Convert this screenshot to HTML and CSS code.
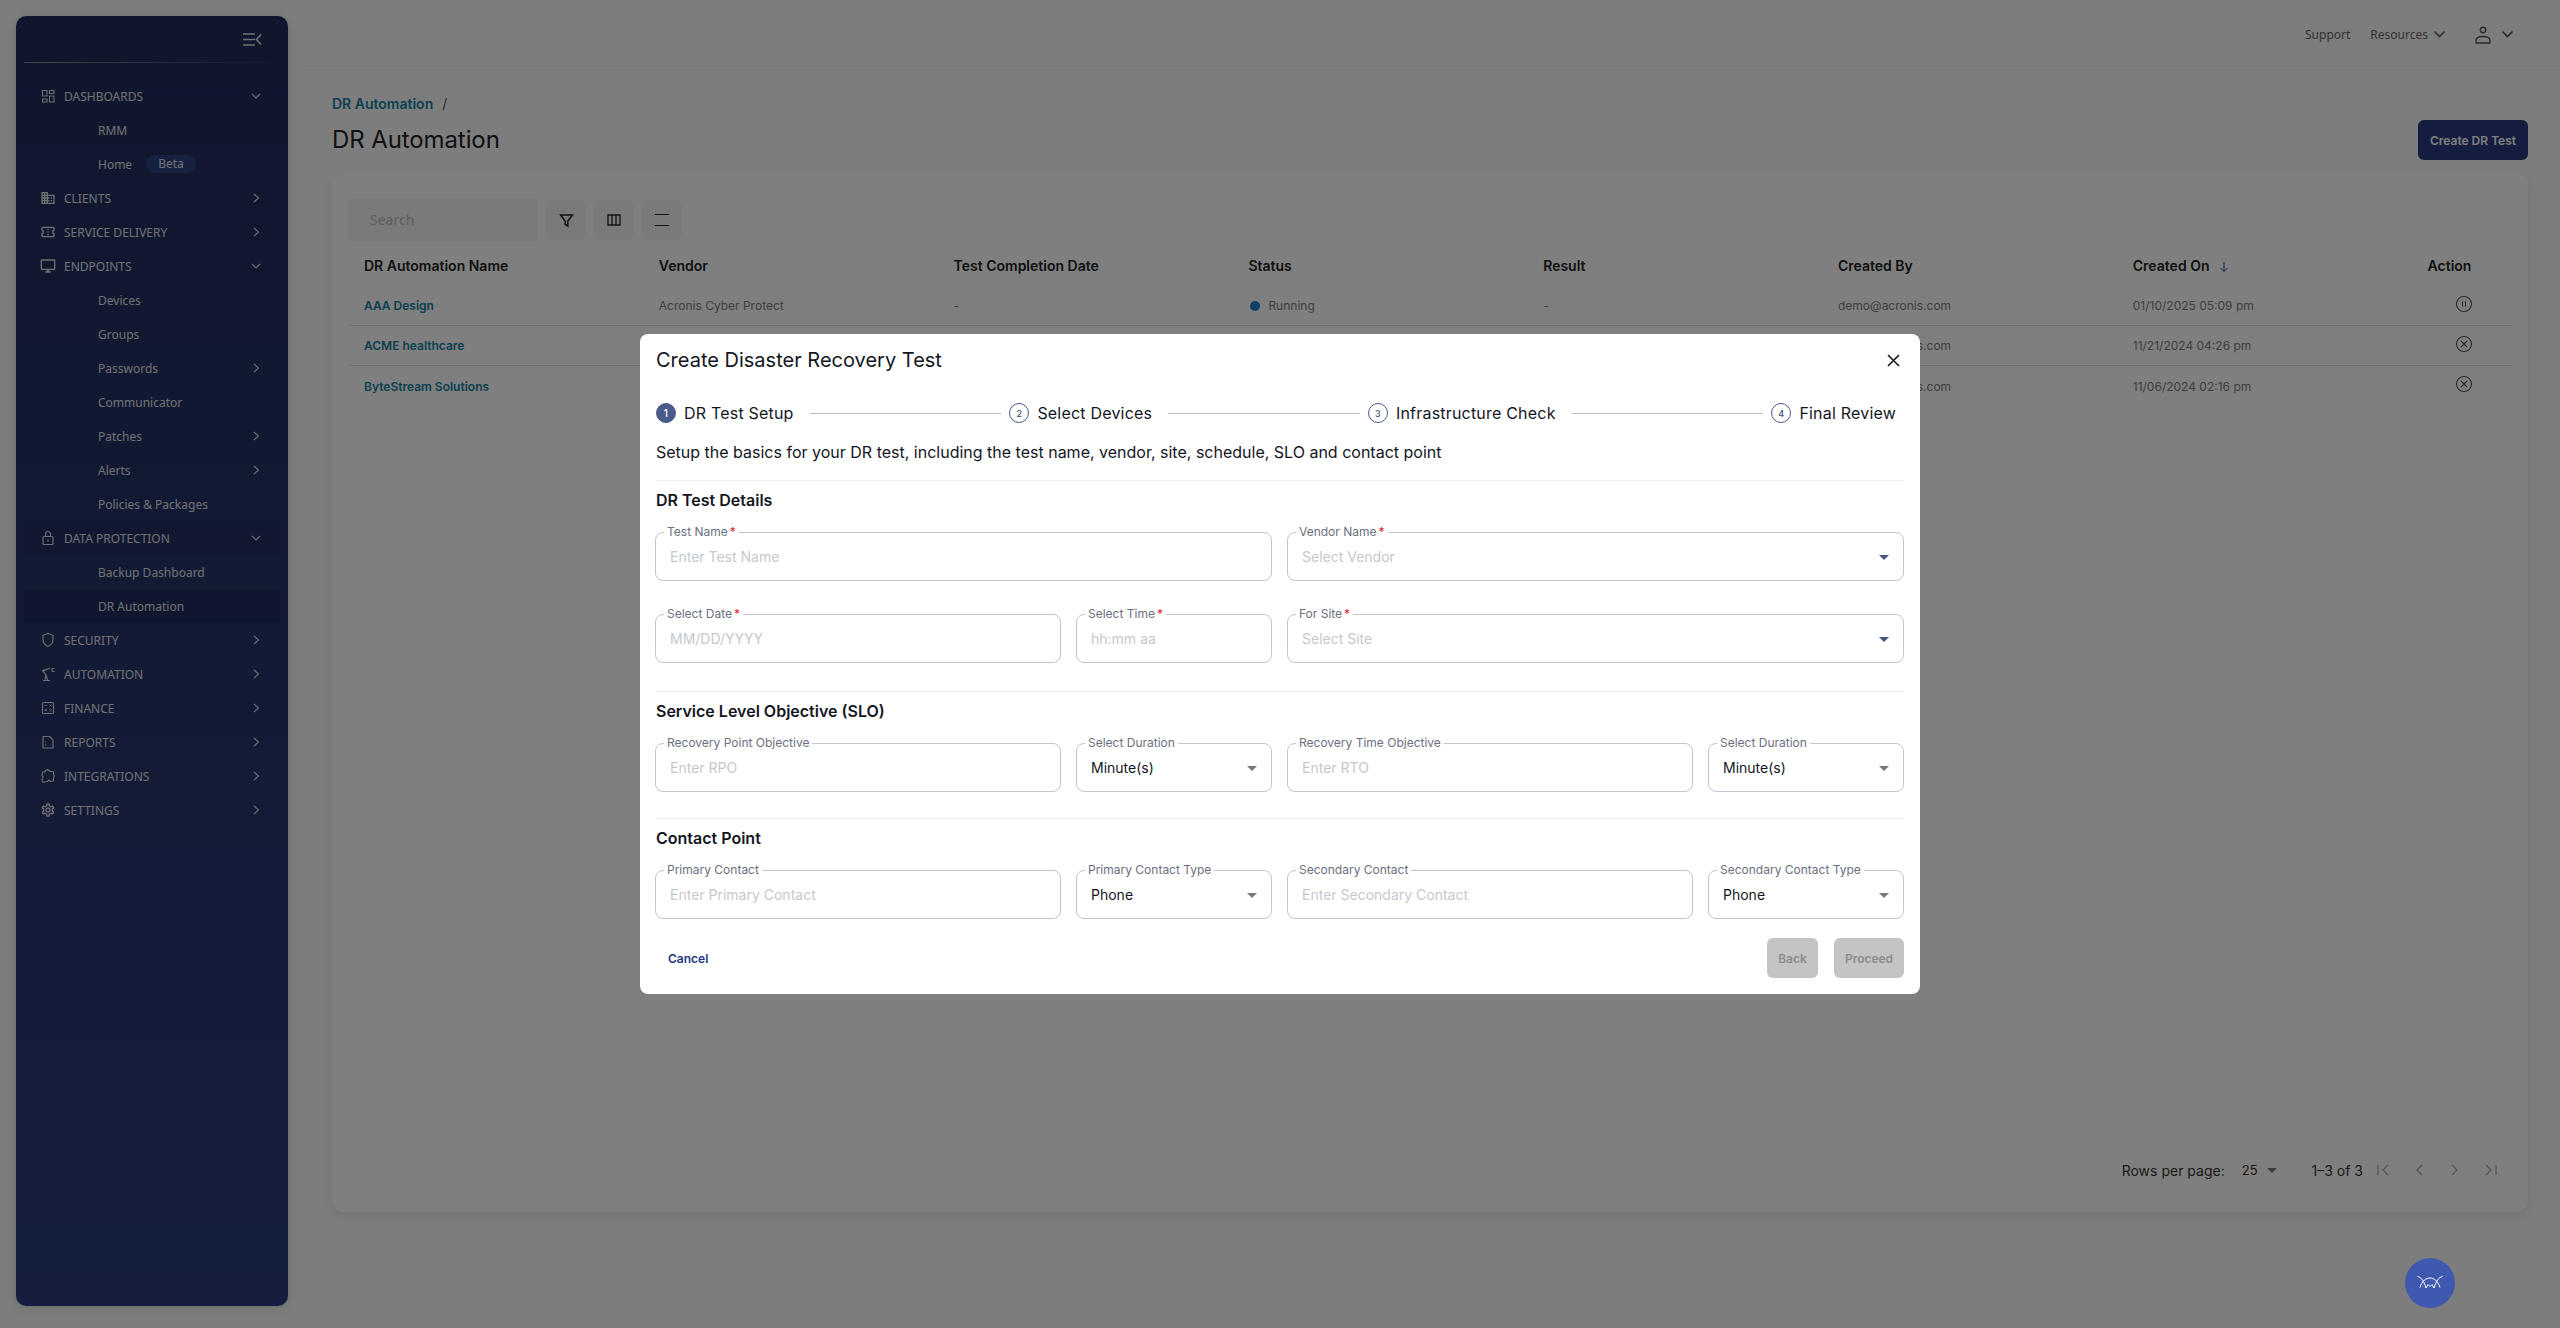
FILE: index.html
```html
<!DOCTYPE html>
<html lang="en">

<head>
    <meta charset="utf-8">
    <title>DR Automation</title>
    <link rel="stylesheet" href="styles.css">
</head>

<body>
    <svg class="icon-defs" aria-hidden="true">
        <symbol id="chev-right" viewBox="0 0 12 12"><path d="M4 2l4.500 4L4 10" fill="none" stroke="currentColor" stroke-width="1.100"/></symbol>
        <symbol id="chev-down" viewBox="0 0 12 12"><path d="M2 4l4 4 4-4" fill="none" stroke="currentColor" stroke-width="1.100"/></symbol>
        <symbol id="circle-x" viewBox="0 0 18 18"><circle cx="9" cy="9" r="7.500" fill="none" stroke="currentColor" stroke-width="1.100"/><path d="M6 6l6 6M12 6l-6 6" stroke="currentColor" stroke-width="1.100"/></symbol>
    </svg>

    <!--Left navigation-->
    <aside class="sidebar">
        <div class="sidebar-head">
            <svg class="collapse" viewBox="0 0 19 13" width="19" height="13">
                <path d="M0 1h12M0 6.500h12M0 12h12" stroke="currentColor" stroke-width="1.400"/>
                <path d="M18 1.500l-4.500 5 4.500 5" fill="none" stroke="currentColor" stroke-width="1.600"/>
            </svg>
        </div>
        <nav class="nav">
            <a class="nav-item">
                <svg class="nav-icon" viewBox="0 0 16 16"><path d="M2.500 2.500h4.500v5.500H2.500zM9.500 2.500H14v3H9.500zM2.500 11H7v3H2.500zM9.500 8H14v6H9.500z" fill="none" stroke="currentColor" stroke-width="1.100"/></svg>
                <span>DASHBOARDS</span><svg class="chev"><use href="#chev-down"/></svg>
            </a>
            <a class="nav-item sub"><span>RMM</span></a>
            <a class="nav-item sub"><span>Home</span><em class="beta">Beta</em></a>
            <a class="nav-item">
                <svg class="nav-icon" viewBox="0 0 24 24"><path fill="currentColor" d="M12 7V3H2v18h20V7H12zM6 19H4v-2h2v2zm0-4H4v-2h2v2zm0-4H4V9h2v2zm0-4H4V5h2v2zm4 12H8v-2h2v2zm0-4H8v-2h2v2zm0-4H8V9h2v2zm0-4H8V5h2v2zm10 12h-8v-2h2v-2h-2v-2h2v-2h-2V9h8v10zm-2-8h-2v2h2v-2zm0 4h-2v2h2v-2z"/></svg>
                <span>CLIENTS</span><svg class="chev"><use href="#chev-right"/></svg>
            </a>
            <a class="nav-item">
                <svg class="nav-icon" viewBox="0 0 24 24"><path fill="currentColor" d="M22 10V6c0-1.110-.9-2-2-2H4c-1.100 0-1.990.89-1.990 2v4c1.100 0 1.990.9 1.990 2s-.89 2-2 2v4c0 1.100.9 2 2 2h16c1.100 0 2-.9 2-2v-4c-1.100 0-2-.9-2-2s.9-2 2-2zm-2-1.460c-1.190.69-2 1.990-2 3.460s.81 2.770 2 3.460V18H4v-2.540c1.190-.69 2-1.990 2-3.460 0-1.480-.8-2.770-1.990-3.460L4 6h16v2.540zM11 15h2v2h-2zm0-4h2v2h-2zm0-4h2v2h-2z"/></svg>
                <span>SERVICE DELIVERY</span><svg class="chev"><use href="#chev-right"/></svg>
            </a>
            <a class="nav-item">
                <svg class="nav-icon" viewBox="0 0 24 24"><path fill="currentColor" d="M21 2H3c-1.100 0-2 .9-2 2v12c0 1.100.9 2 2 2h7v2H8v2h8v-2h-2v-2h7c1.100 0 2-.9 2-2V4c0-1.100-.9-2-2-2zm0 14H3V4h18v12z"/></svg>
                <span>ENDPOINTS</span><svg class="chev"><use href="#chev-down"/></svg>
            </a>
            <a class="nav-item sub"><span>Devices</span></a>
            <a class="nav-item sub"><span>Groups</span></a>
            <a class="nav-item sub"><span>Passwords</span><svg class="chev"><use href="#chev-right"/></svg></a>
            <a class="nav-item sub"><span>Communicator</span></a>
            <a class="nav-item sub"><span>Patches</span><svg class="chev"><use href="#chev-right"/></svg></a>
            <a class="nav-item sub"><span>Alerts</span><svg class="chev"><use href="#chev-right"/></svg></a>
            <a class="nav-item sub"><span>Policies &amp; Packages</span></a>
            <a class="nav-item open">
                <svg class="nav-icon" viewBox="0 0 16 16"><rect x="3" y="6.500" width="10" height="8" rx="1" fill="none" stroke="currentColor" stroke-width="1.100"/><path d="M5.500 6.500V4a2.500 2.500 0 0 1 5 0v2.500" fill="none" stroke="currentColor" stroke-width="1.100"/><circle cx="8" cy="10.500" r="1" fill="currentColor"/></svg>
                <span>DATA PROTECTION</span><svg class="chev"><use href="#chev-down"/></svg>
            </a>
            <a class="nav-item sub"><span>Backup Dashboard</span></a>
            <a class="nav-item sub active"><span>DR Automation</span></a>
            <a class="nav-item">
                <svg class="nav-icon" viewBox="0 0 16 16"><path d="M8 1.500l5 1.800v4.200c0 3.200-2.200 5.600-5 7-2.800-1.400-5-3.800-5-7V3.300z" fill="none" stroke="currentColor" stroke-width="1.100"/></svg>
                <span>SECURITY</span><svg class="chev"><use href="#chev-right"/></svg>
            </a>
            <a class="nav-item">
                <svg class="nav-icon" viewBox="0 0 16 16"><path d="M3 14.500h7M5 14l1-5-3-4 7-3M6 9l1.500 5" fill="none" stroke="currentColor" stroke-width="1.200"/><circle cx="3.500" cy="4.500" r="1.200" fill="currentColor"/><path d="M14.500 2.500h-2.500v3h2.500" fill="none" stroke="currentColor" stroke-width="1"/></svg>
                <span>AUTOMATION</span><svg class="chev"><use href="#chev-right"/></svg>
            </a>
            <a class="nav-item">
                <svg class="nav-icon" viewBox="0 0 16 16"><rect x="2.500" y="2.500" width="11" height="11" rx="1" fill="none" stroke="currentColor" stroke-width="1.100"/><path d="M4.500 5.500h2.500M9.500 4.500l2 2M11.500 4.500l-2 2M4.500 10h2.500M5.750 8.800v2.400M9.500 9.300h2M9.500 11h2" stroke="currentColor" stroke-width=".8"/></svg>
                <span>FINANCE</span><svg class="chev"><use href="#chev-right"/></svg>
            </a>
            <a class="nav-item">
                <svg class="nav-icon" viewBox="0 0 16 16"><path d="M3 2.500h6.500l3.500 3.500v8H3z" fill="none" stroke="currentColor" stroke-width="1.100" stroke-linejoin="round"/><path d="M5.500 7.500v.8M5.500 10.500v.8" stroke="currentColor" stroke-width="1.100"/></svg>
                <span>REPORTS</span><svg class="chev"><use href="#chev-right"/></svg>
            </a>
            <a class="nav-item">
                <svg class="nav-icon" viewBox="0 0 16 16"><path d="M5 4V3l2.500-1.500L10 3.500h3.500v3.200l1 1.300-1 1.300V13l-3 .5-1.500-1.500-1.500 1.500L5 14H2.500l-.5-3 1.300-1.500L2 7.500 2.500 4z" fill="none" stroke="currentColor" stroke-width="1.100" stroke-linejoin="round"/></svg>
                <span>INTEGRATIONS</span><svg class="chev"><use href="#chev-right"/></svg>
            </a>
            <a class="nav-item">
                <svg class="nav-icon" viewBox="0 0 24 24"><path fill="currentColor" d="M19.430 12.980c.04-.32.07-.64.07-.98 0-.34-.03-.66-.07-.98l2.110-1.650c.19-.15.24-.42.12-.64l-2-3.460c-.09-.16-.26-.25-.44-.25-.06 0-.12.01-.17.03l-2.490 1c-.52-.4-1.080-.73-1.690-.98l-.38-2.650C14.460 2.180 14.250 2 14 2h-4c-.25 0-.46.18-.49.42l-.38 2.650c-.61.25-1.170.59-1.690.98l-2.490-1c-.06-.02-.12-.03-.18-.03-.17 0-.34.09-.43.25l-2 3.460c-.13.22-.07.49.12.64l2.110 1.650c-.04.32-.07.65-.07.98 0 .33.03.66.07.98l-2.110 1.650c-.19.15-.24.42-.12.64l2 3.460c.09.16.26.25.44.25.06 0 .12-.01.17-.03l2.490-1c.52.4 1.080.73 1.690.98l.38 2.650c.03.24.24.42.49.42h4c.25 0 .46-.18.49-.42l.38-2.650c.61-.25 1.170-.59 1.690-.98l2.490 1c.06.02.12.03.18.03.17 0 .34-.09.43-.25l2-3.460c.12-.22.07-.49-.12-.64l-2.110-1.650zm-1.980-1.710c.04.31.05.52.05.73 0 .21-.02.43-.05.73l-.14 1.130.89.7 1.080.84-.7 1.210-1.270-.51-1.040-.42-.9.68c-.43.32-.84.56-1.250.73l-1.060.43-.16 1.130-.2 1.350h-1.400l-.19-1.350-.16-1.130-1.060-.43c-.43-.18-.83-.41-1.230-.71l-.91-.7-1.060.43-1.270.51-.7-1.210 1.080-.84.89-.7-.14-1.130c-.03-.31-.05-.54-.05-.74s.02-.43.05-.73l.14-1.130-.89-.7-1.080-.84.7-1.210 1.270.51 1.040.42.9-.68c.43-.32.84-.56 1.250-.73l1.060-.43.16-1.130.2-1.350h1.390l.19 1.350.16 1.130 1.060.43c.43.18.83.41 1.230.71l.91.7 1.060-.43 1.270-.51.7 1.210-1.070.85-.89.7.14 1.130zM12 8c-2.210 0-4 1.790-4 4s1.790 4 4 4 4-1.790 4-4-1.790-4-4-4zm0 6c-1.100 0-2-.9-2-2s.9-2 2-2 2 .9 2 2-.9 2-2 2z"/></svg>
                <span>SETTINGS</span><svg class="chev"><use href="#chev-right"/></svg>
            </a>
        </nav>
    </aside>

    <div class="main">
        <header class="topbar">
            <a class="top-link">Support</a>
            <a class="top-link">Resources
                <svg width="13" height="9" viewBox="0 0 13 9"><path d="M1.500 1.500l5 5 5-5" fill="none" stroke="currentColor" stroke-width="1.700"/></svg>
            </a>
            <a class="top-user">
                <svg width="18" height="18" viewBox="0 0 18 18"><circle cx="9" cy="4" r="2.700" fill="none" stroke="currentColor" stroke-width="1.400"/><path d="M2 17v-2.500C2 12 4.500 10.500 9 10.500s7 1.500 7 4V17z" fill="none" stroke="currentColor" stroke-width="1.400"/></svg>
                <svg width="13" height="9" viewBox="0 0 13 9"><path d="M1.500 1.500l5 5 5-5" fill="none" stroke="currentColor" stroke-width="1.700"/></svg>
            </a>
        </header>

        <div class="page-head">
            <div>
                <div class="crumbs"><a>DR Automation</a><span>/</span></div>
                <h1>DR Automation</h1>
            </div>
            <button class="create-btn">Create DR Test</button>
        </div>

        <section class="card">
            <div class="toolbar">
                <div class="search">Search</div>
                <button class="tool-btn"><svg width="15" height="15" viewBox="0 0 15 15"><path d="M1.500 2h12l-4.700 6v5l-2.600-1.500V8z" fill="none" stroke="currentColor" stroke-width="1.500"/></svg></button>
                <button class="tool-btn"><svg width="14" height="12" viewBox="0 0 14 12"><path d="M1 1h12v10H1zM5 1v10M9 1v10" fill="none" stroke="currentColor" stroke-width="1.300"/></svg></button>
                <button class="tool-btn"><svg width="14" height="14" viewBox="0 0 14 14"><path d="M0 1.500h14M0 12.500h14" stroke="currentColor" stroke-width="1"/></svg></button>
            </div>

            <div class="tbl">
                <div class="tbl-row tbl-head">
                    <div>DR Automation Name</div>
                    <div>Vendor</div>
                    <div>Test Completion Date</div>
                    <div>Status</div>
                    <div>Result</div>
                    <div>Created By</div>
                    <div>Created On <svg class="sort" width="12" height="12" viewBox="0 0 12 12"><path d="M6 1v9.500M2.500 7L6 10.500 9.500 7" fill="none" stroke="currentColor" stroke-width="1"/></svg></div>
                    <div class="col-action">Action</div>
                </div>
                <div class="tbl-row">
                    <div class="name">AAA Design</div>
                    <div>Acronis Cyber Protect</div>
                    <div>-</div>
                    <div class="status"><i></i>Running</div>
                    <div>-</div>
                    <div>demo@acronis.com</div>
                    <div>01/10/2025 05:09 pm</div>
                    <div class="col-icon"><svg width="18" height="18" viewBox="0 0 18 18"><circle cx="9" cy="9" r="7.500" fill="none" stroke="currentColor" stroke-width="1.100"/><path d="M7.500 6.200v5.600M10.500 6.200v5.600" stroke="currentColor" stroke-width="1.100"/></svg></div>
                </div>
                <div class="tbl-row">
                    <div class="name">ACME healthcare</div>
                    <div>Acronis Cyber Protect</div>
                    <div>-</div>
                    <div>Completed</div>
                    <div>-</div>
                    <div>demo@acronis.com</div>
                    <div>11/21/2024 04:26 pm</div>
                    <div class="col-icon"><svg width="18" height="18"><use href="#circle-x"/></svg></div>
                </div>
                <div class="tbl-row last">
                    <div class="name">ByteStream Solutions</div>
                    <div>Acronis Cyber Protect</div>
                    <div>-</div>
                    <div>Completed</div>
                    <div>-</div>
                    <div>demo@acronis.com</div>
                    <div>11/06/2024 02:16 pm</div>
                    <div class="col-icon"><svg width="18" height="18"><use href="#circle-x"/></svg></div>
                </div>
            </div>

            <div class="pager">
                <span>Rows per page:</span>
                <span class="pager-size">25</span>
                <i class="caret grey"></i>
                <span class="pager-count">1–3 of 3</span>
                <svg width="14" height="14" viewBox="0 0 14 14"><path d="M2 2v10M12 2L7 7l5 5" fill="none" stroke="currentColor" stroke-width="1.300"/></svg>
                <svg width="14" height="14" viewBox="0 0 14 14"><path d="M10 2L5 7l5 5" fill="none" stroke="currentColor" stroke-width="1.300"/></svg>
                <svg width="14" height="14" viewBox="0 0 14 14"><path d="M4 2l5 5-5 5" fill="none" stroke="currentColor" stroke-width="1.300"/></svg>
                <svg width="14" height="14" viewBox="0 0 14 14"><path d="M12 2v10M2 2l5 5-5 5" fill="none" stroke="currentColor" stroke-width="1.300"/></svg>
            </div>
        </section>
    </div>

    <!--Dialog and its dimmed backdrop-->
    <div class="backdrop">
        <div class="modal">
            <div class="modal-head">
                <h2>Create Disaster Recovery Test</h2>
                <svg class="close" width="13" height="13" viewBox="0 0 13 13"><path d="M1 1l11 11M12 1L1 12" stroke="currentColor" stroke-width="1.600"/></svg>
            </div>

            <div class="stepper">
                <div class="step first"><b class="num on">1</b>DR Test Setup</div>
                <div class="line"></div>
                <div class="step"><b class="num">2</b>Select Devices</div>
                <div class="line"></div>
                <div class="step"><b class="num">3</b>Infrastructure Check</div>
                <div class="line"></div>
                <div class="step"><b class="num">4</b>Final Review</div>
            </div>

            <p class="intro">Setup the basics for your DR test, including the test name, vendor, site, schedule, SLO and contact point</p>

            <div class="group details">
                <h3>DR Test Details</h3>
                <div class="form-grid">
                    <div class="field wide"><label>Test Name<em>*</em></label><span class="ph">Enter Test Name</span></div>
                    <div class="field wide"><label>Vendor Name<em>*</em></label><span class="ph">Select Vendor</span><i class="caret"></i></div>
                    <div class="field"><label>Select Date<em>*</em></label><span class="ph">MM/DD/YYYY</span></div>
                    <div class="field"><label>Select Time<em>*</em></label><span class="ph">hh:mm aa</span></div>
                    <div class="field wide"><label>For Site<em>*</em></label><span class="ph">Select Site</span><i class="caret"></i></div>
                </div>
            </div>

            <div class="group slo">
                <h3>Service Level Objective (SLO)</h3>
                <div class="form-grid">
                    <div class="field"><label>Recovery Point Objective</label><span class="ph">Enter RPO</span></div>
                    <div class="field"><label>Select Duration</label><span>Minute(s)</span><i class="caret grey"></i></div>
                    <div class="field"><label>Recovery Time Objective</label><span class="ph">Enter RTO</span></div>
                    <div class="field"><label>Select Duration</label><span>Minute(s)</span><i class="caret grey"></i></div>
                </div>
            </div>

            <div class="group">
                <h3>Contact Point</h3>
                <div class="form-grid">
                    <div class="field"><label>Primary Contact</label><span class="ph">Enter Primary Contact</span></div>
                    <div class="field"><label>Primary Contact Type</label><span>Phone</span><i class="caret grey"></i></div>
                    <div class="field"><label>Secondary Contact</label><span class="ph">Enter Secondary Contact</span></div>
                    <div class="field"><label>Secondary Contact Type</label><span>Phone</span><i class="caret grey"></i></div>
                </div>
            </div>

            <div class="modal-foot">
                <a class="cancel">Cancel</a>
                <div class="foot-right">
                    <button class="off back">Back</button>
                    <button class="off">Proceed</button>
                </div>
            </div>
        </div>
    </div>

    <button class="fab">
        <svg width="26" height="14" viewBox="0 0 26 14"><path d="M.5.500C4 1 7 5 9 12l2-3.500 2 2 2-2 2 3.500C19 5 22 1 25.500.5M3 11.500C5 5 9 2 13 2s8 3 10 9.500" fill="none" stroke="#fff" stroke-width="1"/></svg>
    </button>
</body>

</html>
```
FILE: styles.css
```css
* {
    box-sizing: border-box;
}

html,
body {
    height: 100%;
}

body {
    margin: 0;
    display: flex;
    overflow: hidden;
    background: #fafafa;
    color: #222;
    font-family: Inter, "Liberation Sans", sans-serif;
    font-size: 12px;
}

button {
    font-family: inherit;
    border: 0;
}

.icon-defs {
    display: none;
}

/*This section sets the design of the sidebar.*/
.sidebar {
    flex: 0 0 272px;
    height: 1290px;
    margin: 16px;
    border-radius: 10px;
    background: linear-gradient(180deg, #202c58, #2a3d7c);
    box-shadow: 0 2px 8px rgba(0, 0, 0, 0.15);
    color: #e0e1e6;
    font-family: "Noto Sans", sans-serif;
}

.sidebar-head {
    height: 47px;
    margin: 0 8px;
    display: flex;
    justify-content: flex-end;
    align-items: flex-end;
    padding: 0 8px 16px 0;
    border-bottom: 1px solid transparent;
    border-image: linear-gradient(90deg, #8b90a8, #3a4670 70%, #243060) 1;
}

.collapse {
    margin-right: 10px;
}

.nav {
    margin-top: 16px;
}

.nav-item {
    height: 34px;
    margin: 0 8px;
    padding: 0 18px 0 16px;
    display: flex;
    align-items: center;
    font-size: 12px;
}

.nav-item.sub {
    padding-left: 74px;
}

.nav-item.open {
    background: rgba(0, 0, 0, 0.05);
}

.nav-item.active {
    background: rgba(0, 0, 0, 0.12);
}

.nav-icon {
    width: 16px;
    height: 16px;
    margin-right: 8px;
    flex: none;
}

.nav-item .chev {
    width: 12px;
    height: 12px;
    margin-left: auto;
}

.beta {
    margin-left: 14px;
    padding: 0 12px;
    height: 18px;
    line-height: 18px;
    border-radius: 9px;
    background: #2d4182;
    font-style: normal;
}

/*This section sets the design of the page behind the dialog.*/
.main {
    flex: 1;
    min-width: 0;
    display: flex;
    flex-direction: column;
}

.topbar {
    height: 70px;
    flex: none;
    display: flex;
    justify-content: flex-end;
    align-items: center;
    gap: 20px;
    padding-right: 46px;
    border-bottom: 1px solid #ececec;
    color: #666;
    font-family: "Noto Sans", sans-serif;
}

.top-link,
.top-user {
    display: flex;
    align-items: center;
    gap: 5px;
}

.top-user {
    margin-left: 8px;
    gap: 9px;
    color: #555;
}

.page-head {
    padding: 24px 32px 14px 28px;
    display: flex;
    justify-content: space-between;
    align-items: flex-end;
}

.crumbs {
    font-size: 14px;
    font-weight: 600;
    line-height: 20px;
    color: #14809f;
}

.crumbs span {
    margin-left: 9px;
    font-weight: 400;
    color: #555;
}

h1 {
    margin: 8px 0 0;
    font-size: 24px;
    font-weight: 400;
    line-height: 36px;
    letter-spacing: -0.1px;
    color: #222;
}

.create-btn {
    width: 110px;
    height: 40px;
    margin-bottom: -2px;
    border-radius: 6px;
    background: #283a80;
    color: #fff;
    font-size: 12px;
    font-weight: 600;
}

.card {
    margin: 0 32px 0 28px;
    height: 1040px;
    padding: 26px 16px 0;
    display: flex;
    flex-direction: column;
    background: #fff;
    border-radius: 12px;
    box-shadow: 0 4px 8px rgba(0, 0, 0, 0.08);
}

.toolbar {
    display: flex;
    align-items: center;
    gap: 8px;
}

.search {
    width: 190px;
    height: 44px;
    padding-left: 22px;
    line-height: 44px;
    border-radius: 6px;
    background: #f4f4f4;
    color: #bbb;
    font-family: "Noto Sans", sans-serif;
    font-size: 14px;
}

.tool-btn {
    width: 40px;
    height: 40px;
    display: flex;
    align-items: center;
    justify-content: center;
    border-radius: 6px;
    background: #f4f4f4;
    color: #222;
}

.tbl {
    margin-top: 3px;
}

.tbl-row {
    height: 40px;
    padding-left: 16px;
    display: grid;
    grid-template-columns: repeat(7, 294.8px) 1fr;
    align-items: center;
    border-bottom: 1px solid #ddd;
    color: #808080;
}

.tbl-head {
    height: 41px;
    border-bottom: 0;
    font-size: 14px;
    font-weight: 600;
    color: #222;
}

.tbl-row.last {
    border-bottom: 0;
}

.name {
    font-weight: 600;
    color: #14809f;
}

.status i {
    display: inline-block;
    width: 10px;
    height: 10px;
    margin: 0 8px 0 2px;
    border-radius: 50%;
    background: #1a80d0;
    vertical-align: -1px;
}

.sort {
    margin-left: 5px;
    color: #33478f;
    vertical-align: -2px;
}

.col-icon {
    padding-left: 27px;
    display: flex;
    color: #555;
    margin-top: -4px;
}

.pager {
    margin-top: auto;
    height: 84px;
    padding-right: 14px;
    display: flex;
    justify-content: flex-end;
    align-items: center;
    gap: 22px;
    font-size: 14px;
    color: #333;
}

.pager-size {
    font-size: 13px;
    margin-left: -5px;
}

.pager .caret {
    margin-left: -13px;
}

.pager-count {
    margin-left: 13px;
    margin-right: -9px;
}

.pager svg {
    color: #aaa;
}

/*This section sets the design of the dialog.*/
.backdrop {
    position: fixed;
    inset: 0;
    display: flex;
    align-items: center;
    justify-content: center;
    background: rgba(0, 0, 0, 0.5);
}

.modal {
    width: 1280px;
    height: 660px;
    padding: 0 16px;
    border-radius: 8px;
    background: #fff;
    color: #14161f;
}

.modal-head {
    height: 52px;
    display: flex;
    justify-content: space-between;
    align-items: center;
}

h2 {
    margin: 0;
    font-size: 20px;
    font-weight: 400;
    line-height: 52px;
}

.close {
    margin-right: 4px;
}

.stepper {
    height: 20px;
    margin-top: 17px;
    display: flex;
    align-items: center;
}

.step {
    display: flex;
    align-items: center;
    padding: 0 8px;
    gap: 8px;
    font-size: 16px;
    letter-spacing: 0.2px;
    white-space: nowrap;
}

.step.first {
    padding-left: 0;
}

.num {
    width: 20px;
    height: 20px;
    display: flex;
    align-items: center;
    justify-content: center;
    border: 1px solid #4a5a8a;
    border-radius: 50%;
    font-size: 9px;
    font-weight: 500;
    color: #3e4d80;
}

.num.on {
    background: #4a5a8a;
    color: #fff;
    font-size: 10px;
}

.line {
    flex: 1;
    height: 1px;
    margin-left: 8px;
    background: #bdbdbd;
}

.intro {
    margin: 19px 0 0;
    height: 38px;
    font-size: 16px;
    line-height: 20px;
}

.group {
    border-top: 1px solid #eee;
    padding: 9px 0 0;
}

h3 {
    margin: 0;
    font-size: 16px;
    font-weight: 600;
    line-height: 20px;
}

.form-grid {
    margin: 22px 0 27px -1px;
    display: grid;
    grid-template-columns: 406fr 196fr 406fr 196fr;
    column-gap: 15px;
    row-gap: 33px;
}

.details .form-grid {
    margin-bottom: 28px;
}

.slo .form-grid {
    margin-bottom: 26px;
}

.field {
    position: relative;
    height: 49px;
    padding: 0 34px 0 14px;
    display: flex;
    align-items: center;
    border: 1px solid #c3c4d0;
    border-radius: 8px;
    font-size: 14px;
}

.field.wide {
    grid-column: span 2;
}

.field label {
    position: absolute;
    top: -9px;
    left: 8px;
    padding: 0 3px;
    background: #fff;
    font-size: 12px;
    line-height: 16px;
    color: #6c6f80;
}

.field label em {
    margin-left: 2px;
    font-style: normal;
    color: #e0202c;
}

.ph {
    color: #c6c8ce;
}

.caret {
    width: 0;
    height: 0;
    border-left: 5px solid transparent;
    border-right: 5px solid transparent;
    border-top: 5px solid #4a5480;
}

.caret.grey {
    border-top-color: #777;
}

.field .caret {
    position: absolute;
    right: 14px;
    top: 22px;
}

.modal-foot {
    display: flex;
    justify-content: space-between;
    align-items: center;
    margin-top: -8px;
}

.cancel {
    margin-left: 12px;
    font-weight: 600;
    color: #26367e;
}

.foot-right {
    display: flex;
    gap: 16px;
}

.off {
    width: 70px;
    height: 40px;
    border-radius: 6px;
    background: #c4c4c4;
    color: #8c8c8c;
    font-size: 12px;
    font-weight: 600;
}

.off.back {
    width: 51px;
}

.fab {
    position: fixed;
    left: 2405px;
    top: 1258px;
    width: 50px;
    height: 50px;
    display: flex;
    align-items: center;
    justify-content: center;
    padding: 0;
    border-radius: 50%;
    background: #4059b0;
}
```
